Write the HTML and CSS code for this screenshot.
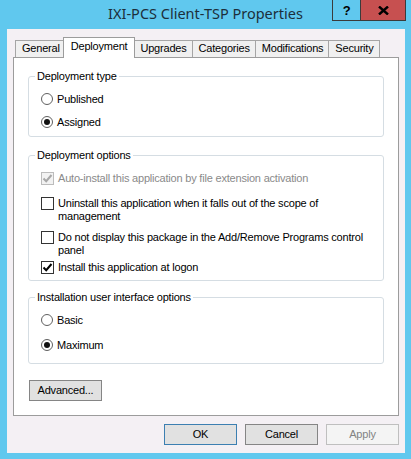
FILE: index.html
```html
<!DOCTYPE html>
<html lang="en">

<head>
    <meta charset="UTF-8">
    <meta name="viewport" content="width=device-width, initial-scale=1.0">
    <title>IXI-PCS Client-TSP Properties</title>
    <link rel="stylesheet" href="styles.css">
</head>

<body>
    <div class="window">
        <div class="titlebar">
            <span class="title">IXI-PCS Client-TSP Properties</span>
            <div class="caption">
                <span class="cap help">?</span>
                <span class="cap close">
                    <svg width="11" height="9" viewBox="0 0 11 9">
                        <path d="M1 0.5 L10 8.5 M10 0.5 L1 8.5" stroke="#000" stroke-width="2.4" fill="none" />
                    </svg>
                </span>
            </div>
        </div>

        <div class="client">
            <div class="tabs">
                <span class="tab">General</span>
                <span class="tab active">Deployment</span>
                <span class="tab">Upgrades</span>
                <span class="tab">Categories</span>
                <span class="tab">Modifications</span>
                <span class="tab">Security</span>
            </div>

            <div class="page">
                <fieldset class="group group-type">
                    <legend>Deployment type</legend>
                    <div class="opt">
                        <span class="radio"></span>
                        <span class="label">Published</span>
                    </div>
                    <div class="opt">
                        <span class="radio checked"></span>
                        <span class="label">Assigned</span>
                    </div>
                </fieldset>

                <fieldset class="group group-options">
                    <legend>Deployment options</legend>
                    <div class="opt disabled">
                        <span class="check checked">
                            <svg width="11" height="11" viewBox="0 0 11 11">
                                <path d="M1.5 5.5 L4.2 8.2 L9.5 2" stroke="#a7a7a7" stroke-width="2" fill="none" />
                            </svg>
                        </span>
                        <span class="label">Auto-install this application by file extension activation</span>
                    </div>
                    <div class="opt">
                        <span class="check"></span>
                        <span class="label">Uninstall this application when it falls out of the scope of management</span>
                    </div>
                    <div class="opt">
                        <span class="check"></span>
                        <span class="label">Do not display this package in the Add/Remove Programs control panel</span>
                    </div>
                    <div class="opt">
                        <span class="check checked">
                            <svg width="11" height="11" viewBox="0 0 11 11">
                                <path d="M1.5 5.5 L4.2 8.2 L9.5 2" stroke="#000" stroke-width="2" fill="none" />
                            </svg>
                        </span>
                        <span class="label">Install this application at logon</span>
                    </div>
                </fieldset>

                <fieldset class="group group-ui">
                    <legend>Installation user interface options</legend>
                    <div class="opt">
                        <span class="radio"></span>
                        <span class="label">Basic</span>
                    </div>
                    <div class="opt">
                        <span class="radio checked"></span>
                        <span class="label">Maximum</span>
                    </div>
                </fieldset>

                <button class="btn advanced">Advanced...</button>
            </div>

            <div class="footer">
                <button class="btn default">OK</button>
                <button class="btn">Cancel</button>
                <button class="btn" disabled>Apply</button>
            </div>
        </div>
    </div>
</body>

</html>
```

FILE: styles.css
```css
* {
    box-sizing: border-box;
}

body {
    margin: 0;
    width: 411px;
    height: 459px;
    overflow: hidden;
    background: #60c8ee;
    font-family: "Liberation Sans", Arial, sans-serif;
    font-size: 11px;
    letter-spacing: -0.2px;
    color: #000;
}

/* title bar */
.titlebar {
    position: relative;
    height: 29px;
}

.title {
    display: block;
    padding-top: 6px;
    text-align: center;
    font-family: "Noto Sans", sans-serif;
    font-size: 14.5px;
    line-height: 15px;
    letter-spacing: 0;
    color: #1c2f3b;
}

.caption {
    position: absolute;
    top: 0;
    right: 5px;
    display: flex;
}

.cap {
    display: flex;
    align-items: center;
    justify-content: center;
    height: 21px;
    border: 1px solid #3b3b3b;
    border-top: none;
}

.help {
    width: 28px;
    border-right: none;
    font-weight: bold;
    font-size: 13px;
}

.close {
    width: 46px;
    background: #c75050;
}

/* dialog body */
.client {
    height: 424px;
    margin: 0 6px 0 7px;
    padding-top: 8px;
    background: #f4f0f4;
}

.tabs {
    display: flex;
    align-items: flex-end;
    height: 20px;
    margin-left: 8px;
}

.tab {
    height: 17px;
    padding: 0 5px 0 6px;
    margin-right: -1px;
    border: 1px solid #a5a5a5;
    border-bottom: none;
    background: #f0f0f0;
    line-height: 15px;
    white-space: nowrap;
}

.tab.active {
    position: relative;
    z-index: 1;
    height: 21px;
    margin: 0 -2px -1px;
    padding: 1px 7px 0;
    background: #fff;
    border-color: #9c9c9c;
}

.page {
    width: 386px;
    height: 359px;
    margin-left: 6px;
    padding: 11px 14px 0;
    background: #fff;
    border: 1px solid #9c9c9c;
}

/* group boxes */
.group {
    margin: 0;
    min-width: 0;
    padding: 10px 6px 7px 6px;
    border: 1px solid #d5dde3;
    border-radius: 3px;
}

.group legend {
    padding: 0 2px;
    line-height: 14px;
}

.group-options {
    margin-top: 11px;
    padding-bottom: 6px;
}

.group-ui {
    margin-top: 9px;
    padding-bottom: 11px;
}

.opt {
    display: flex;
    align-items: flex-start;
    margin-left: 6px;
    line-height: 13px;
}

.opt .label {
    margin-left: 4px;
}

.group-type .opt + .opt {
    margin-top: 10px;
}

.group-ui .opt + .opt {
    margin-top: 12px;
}

.group-options .opt:nth-of-type(2) {
    margin-top: 12px;
}

.group-options .opt:nth-of-type(3) {
    margin-top: 8px;
}

.group-options .opt:nth-of-type(4) {
    margin-top: 4px;
}

.opt.disabled .label {
    color: #8a8a8a;
}

.radio {
    flex: none;
    width: 12px;
    height: 12px;
    border: 1px solid #606060;
    border-radius: 50%;
    background: #fff;
    display: flex;
    align-items: center;
    justify-content: center;
}

.radio.checked::after {
    content: "";
    width: 6px;
    height: 6px;
    border-radius: 50%;
    background: #111;
}

.check {
    flex: none;
    width: 13px;
    height: 13px;
    border: 1px solid #333;
    background: #fff;
    display: flex;
    align-items: center;
    justify-content: center;
}

.opt.disabled .check {
    border-color: #bcbcbc;
    background: #f2f2f2;
}

/* buttons */
.btn {
    width: 73px;
    height: 21px;
    padding: 0;
    border: 1px solid #858585;
    background: #e1e1e1;
    font-family: inherit;
    font-size: 11px;
    letter-spacing: inherit;
    line-height: 19px;
    color: #000;
}

.btn.advanced {
    margin-top: 16px;
    margin-left: 1px;
}

.btn.default {
    border-color: #3c7fb1;
}

.btn:disabled {
    background: #f4f4f4;
    border-color: #bfbfbf;
    color: #838383;
}

.footer {
    display: flex;
    justify-content: flex-end;
    gap: 8px;
    margin-top: 8px;
    padding-right: 6px;
}
```
